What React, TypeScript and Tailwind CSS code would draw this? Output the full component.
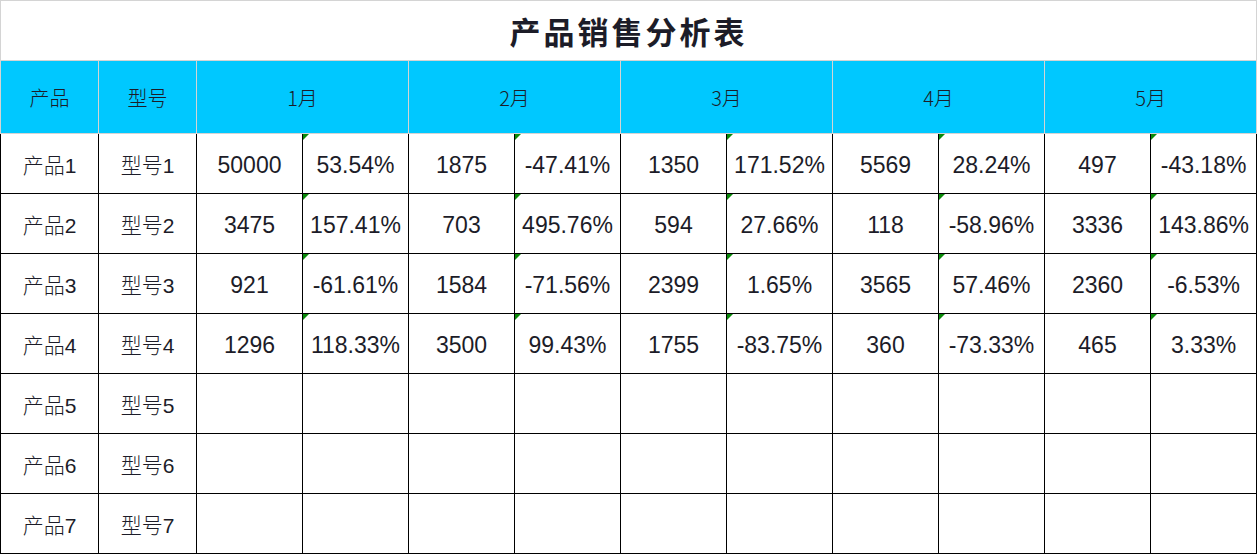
import React from "react"

type Row = {
  name: string
  model: string
  cells: [string, string][]
}

const months = ["1月", "2月", "3月", "4月", "5月"]

const rows: Row[] = [
  {
    name: "产品1",
    model: "型号1",
    cells: [
      ["50000", "53.54%"],
      ["1875", "-47.41%"],
      ["1350", "171.52%"],
      ["5569", "28.24%"],
      ["497", "-43.18%"],
    ],
  },
  {
    name: "产品2",
    model: "型号2",
    cells: [
      ["3475", "157.41%"],
      ["703", "495.76%"],
      ["594", "27.66%"],
      ["118", "-58.96%"],
      ["3336", "143.86%"],
    ],
  },
  {
    name: "产品3",
    model: "型号3",
    cells: [
      ["921", "-61.61%"],
      ["1584", "-71.56%"],
      ["2399", "1.65%"],
      ["3565", "57.46%"],
      ["2360", "-6.53%"],
    ],
  },
  {
    name: "产品4",
    model: "型号4",
    cells: [
      ["1296", "118.33%"],
      ["3500", "99.43%"],
      ["1755", "-83.75%"],
      ["360", "-73.33%"],
      ["465", "3.33%"],
    ],
  },
  { name: "产品5", model: "型号5", cells: [] },
  { name: "产品6", model: "型号6", cells: [] },
  { name: "产品7", model: "型号7", cells: [] },
]

const cjk = "font-['Noto_Sans_CJK_SC',sans-serif]"
const num = "font-['Liberation_Sans','Noto_Sans_CJK_SC',sans-serif]"

function Flag() {
  // little green marker Excel draws on number-as-text cells
  return (
    <span className="absolute left-0 top-0 h-0 w-0 border-t-[6px] border-r-[6px] border-t-[#0a8a0a] border-r-transparent" />
  )
}

export default function App() {
  return (
    <div className="w-[1257px] h-[554px] bg-white overflow-hidden">
      <table className="table-fixed border-collapse w-[1257px] text-[#1c1c28]">
        <colgroup>
          <col className="w-[98px]" />
          <col className="w-[98px]" />
          {Array.from({ length: 10 }).map((_, i) => (
            <col key={i} className="w-[106px]" />
          ))}
        </colgroup>
        <tbody>
          <tr className="h-[60px]">
            <td
              colSpan={12}
              className={`border border-[#d4d4d4] pt-[2px] text-center text-[31px] font-bold tracking-[3px] ${cjk}`}
            >
              产品销售分析表
            </td>
          </tr>
          <tr className="h-[73px] bg-[#00c8ff]">
            <td className={`border border-[#d4d4d4] pt-[2px] text-center text-[20px] font-light ${cjk}`}>产品</td>
            <td className={`border border-[#d4d4d4] pt-[2px] text-center text-[20px] font-light ${cjk}`}>型号</td>
            {months.map((m) => (
              <td
                key={m}
                colSpan={2}
                className={`border border-[#d4d4d4] pt-[2px] text-center text-[20px] font-light ${cjk}`}
              >
                {m}
              </td>
            ))}
          </tr>
          {rows.map((r) => (
            <tr key={r.name} className="h-[60px]">
              <td className={`border border-black pt-[3px] text-center text-[21px] ${num}`}>
                <span className={`${cjk} font-light`}>{r.name.slice(0, 2)}</span>
                {r.name.slice(2)}
              </td>
              <td className={`border border-black pt-[3px] text-center text-[21px] ${num}`}>
                <span className={`${cjk} font-light`}>{r.model.slice(0, 2)}</span>
                {r.model.slice(2)}
              </td>
              {Array.from({ length: 5 }).map((_, i) => {
                const c = r.cells[i]
                return (
                  <React.Fragment key={i}>
                    <td className={`border border-black pt-[3px] text-center text-[23px] ${num}`}>{c ? c[0] : ""}</td>
                    <td className={`relative border border-black pt-[3px] text-center text-[23px] ${num}`}>
                      {c && <Flag />}
                      {c ? c[1] : ""}
                    </td>
                  </React.Fragment>
                )
              })}
            </tr>
          ))}
        </tbody>
      </table>
    </div>
  )
}
